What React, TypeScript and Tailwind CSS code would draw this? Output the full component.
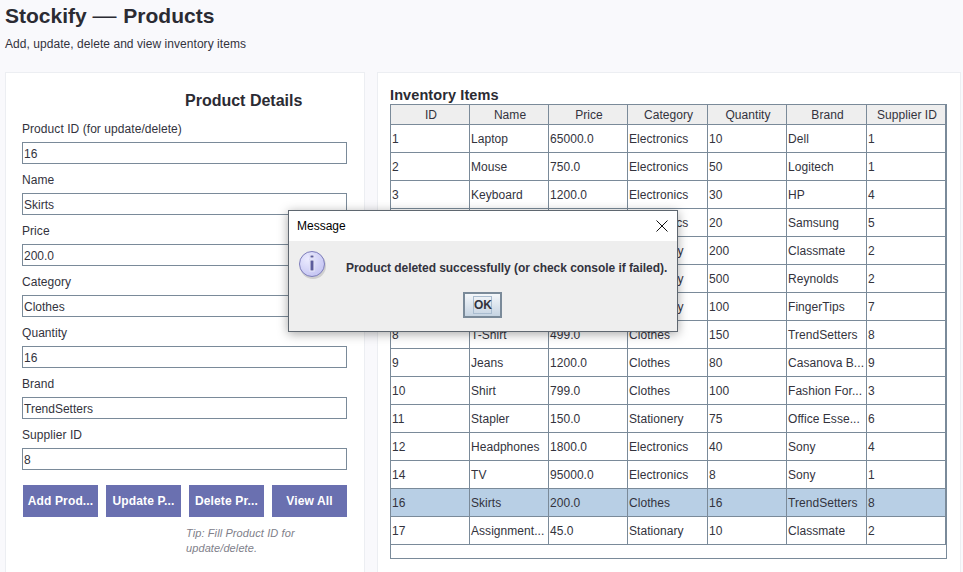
const font = "font-['Liberation_Sans',Arial,sans-serif]";

const fields = [
  ["Product ID (for update/delete)", "16"],
  ["Name", "Skirts"],
  ["Price", "200.0"],
  ["Category", "Clothes"],
  ["Quantity", "16"],
  ["Brand", "TrendSetters"],
  ["Supplier ID", "8"],
];

const columns = ["ID", "Name", "Price", "Category", "Quantity", "Brand", "Supplier ID"];
const colWidths = ["w-[79px]", "w-[79px]", "w-[79px]", "w-[80px]", "w-[79px]", "w-[80px]", "w-[79px]"];

const rows = [
  ["1", "Laptop", "65000.0", "Electronics", "10", "Dell", "1"],
  ["2", "Mouse", "750.0", "Electronics", "50", "Logitech", "1"],
  ["3", "Keyboard", "1200.0", "Electronics", "30", "HP", "4"],
  ["4", "Monitor", "15000.0", "Electronics", "20", "Samsung", "5"],
  ["5", "Notebook", "60.0", "Stationery", "200", "Classmate", "2"],
  ["6", "Pen", "20.0", "Stationery", "500", "Reynolds", "2"],
  ["7", "Marker", "90.0", "Stationery", "100", "FingerTips", "7"],
  ["8", "T-Shirt", "499.0", "Clothes", "150", "TrendSetters", "8"],
  ["9", "Jeans", "1200.0", "Clothes", "80", "Casanova B...", "9"],
  ["10", "Shirt", "799.0", "Clothes", "100", "Fashion For...", "3"],
  ["11", "Stapler", "150.0", "Stationery", "75", "Office Esse...", "6"],
  ["12", "Headphones", "1800.0", "Electronics", "40", "Sony", "4"],
  ["14", "TV", "95000.0", "Electronics", "8", "Sony", "1"],
  ["16", "Skirts", "200.0", "Clothes", "16", "TrendSetters", "8"],
  ["17", "Assignment...", "45.0", "Stationary", "10", "Classmate", "2"],
];

const buttons = ["Add Prod...", "Update P...", "Delete Pr...", "View All"];

function DetailsPanel() {
  return (
    <div className="w-[360px] shrink-0 border border-b-0 border-[#eceef2] bg-white px-[16px] pt-[18px]">
      <h2 className="pl-[163px] text-[16px] font-bold leading-[19px] text-[#2b2b33]">Product Details</h2>
      <div className="mt-[12px] flex flex-col gap-[9px]">
        {fields.map(([label, value]) => (
          <div key={label} className="flex flex-col">
            <label className="h-[18px] text-[12px] leading-[14px] tracking-[0.06px] text-[#33333d]">{label}</label>
            <div className="mt-[2px] h-[22px] w-[325px] border border-[#7a8a99] bg-white pl-[1px] text-[12px] leading-[22px] text-[#33333d]">
              {value}
            </div>
          </div>
        ))}
      </div>
      <div className="mt-[15px] flex gap-[8px] pl-[1px]">
        {buttons.map((b) => (
          <div
            key={b}
            className="flex h-[32px] w-[75px] items-center justify-center bg-[#6a70b0] text-[12px] font-bold tracking-[0.15px] text-white"
          >
            {b}
          </div>
        ))}
      </div>
      <p className="ml-[164px] mt-[9px] w-[130px] text-[11px] italic leading-[15px] tracking-[0.1px] text-[#80808a]">
        Tip: Fill Product ID for update/delete.
      </p>
    </div>
  );
}

function InventoryPanel() {
  return (
    <div className="ml-[12px] w-[584px] shrink-0 border border-b-0 border-[#eceef2] bg-white pl-[12px] pt-[14px]">
      <h2 className="text-[14.5px] font-bold leading-[17px] tracking-[0.1px] text-[#2b2b33]">Inventory Items</h2>
      <div className="h-[455px] w-[557px] border border-[#7a8a99]">
        <table className="w-[555px] table-fixed border-separate border-spacing-0 text-[12px] tracking-[0.05px] text-[#33333d]">
          <thead>
            <tr>
              {columns.map((c, i) => (
                <th
                  key={c}
                  className={`${colWidths[i]} h-[20px] border-r border-b border-[#7a8a99] bg-[#eeeeee] p-0 pl-[2px] pt-[1px] text-center font-normal leading-[14px]`}
                >
                  {c}
                </th>
              ))}
            </tr>
          </thead>
          <tbody>
            {rows.map((r) => (
              <tr key={r[0]} className={r[0] === "16" ? "bg-[#b8cfe5]" : ""}>
                {r.map((v, i) => (
                  <td
                    key={i}
                    className="h-[28px] overflow-hidden whitespace-nowrap border-r border-b border-[#7a8a99] p-0 pl-[1px] leading-[14px]"
                  >
                    {v}
                  </td>
                ))}
              </tr>
            ))}
          </tbody>
        </table>
      </div>
    </div>
  );
}

function MessageDialog() {
  return (
    <div className="absolute left-[288px] top-[210px] h-[122px] w-[390px] border border-[#5f6770] bg-[#eeeeee] shadow-[0_2px_10px_rgba(0,0,0,0.35)]">
      <div className="flex h-[30px] items-center justify-between bg-white pl-[8px] pr-[9px]">
        <span className="text-[12px] text-black">Message</span>
        <svg width="12" height="12" viewBox="0 0 12 12" fill="none" stroke="#111" strokeWidth="1">
          <path d="M0.5 0.5L11.5 11.5M11.5 0.5L0.5 11.5" />
        </svg>
      </div>
      <div className="relative h-[90px]">
        <svg className="absolute left-[10px] top-[9px]" width="30" height="30" viewBox="0 0 30 30">
          <defs>
            <radialGradient id="info" cx="35%" cy="30%" r="75%">
              <stop offset="0%" stopColor="#ececff" />
              <stop offset="100%" stopColor="#c4c4f2" />
            </radialGradient>
          </defs>
          <circle cx="14" cy="16" r="13" fill="#a9a9a9" opacity="0.45" />
          <circle cx="13" cy="14" r="12.5" fill="url(#info)" stroke="#7d7dba" strokeWidth="1" />
          <rect x="10.5" y="4.5" width="5" height="4" fill="#f4f4ff" stroke="#d6d6f4" strokeWidth="0.5" />
          <rect x="10.5" y="9.5" width="5" height="12" fill="#f4f4ff" stroke="#d6d6f4" strokeWidth="0.5" />
          <rect x="11.5" y="5.5" width="3" height="2" fill="#5c5c9c" />
          <rect x="11.5" y="10.5" width="3" height="10" fill="#5c5c9c" />
        </svg>
        <p className="absolute left-[57px] top-[20px] whitespace-nowrap text-[12px] font-bold leading-[14px] tracking-[-0.05px] text-[#33333d]">
          Product deleted successfully (or check console if failed).
        </p>
        <div className="absolute left-[174px] top-[51px] flex h-[26px] w-[39px] items-center justify-center border-2 border-[#7a8a99] bg-gradient-to-b from-[#f4f7fa] to-[#c6d4e2]">
          <span className="h-[18px] w-[19px] border border-[#a9bccf] text-center text-[12px] font-bold leading-[16px] text-[#33333d]">OK</span>
        </div>
      </div>
    </div>
  );
}

export default function App() {
  return (
    <div className={`relative h-[572px] w-[963px] overflow-hidden bg-[#f9f9fc] ${font}`}>
      <div className="pl-[5px] pt-[3px]">
        <h1 className="text-[21px] font-bold leading-[25px] text-[#2b2b33]">
          Stockify <span className="mr-[1px] text-[24px] font-normal leading-none">—</span> Products
        </h1>
        <p className="mt-[9px] text-[12px] leading-[14px] tracking-[0.05px] text-[#33333d]">Add, update, delete and view inventory items</p>
      </div>
      <div className="ml-[5px] mt-[21px] flex h-[500px]">
        <DetailsPanel />
        <InventoryPanel />
      </div>
      <MessageDialog />
    </div>
  );
}
